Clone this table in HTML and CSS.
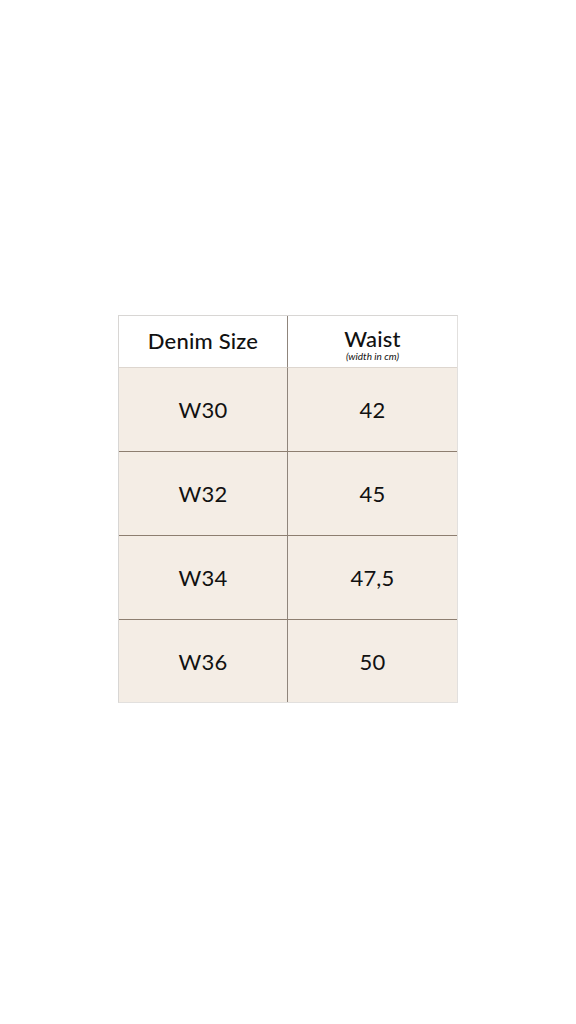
FILE: index.html
```html
<!DOCTYPE html>
<html lang="en">
<head>
<meta charset="utf-8">
<title>Denim Size Chart</title>
<link rel="stylesheet" href="styles.css">
</head>
<body>
<main class="page">
  <div class="chart">
    <div class="cell head left">Denim Size</div>
    <div class="cell head right">
      <span class="title">Waist</span>
      <span class="sub">(width in cm)</span>
    </div>
    <div class="cell body left">W30</div>
    <div class="cell body right">42</div>
    <div class="cell body left">W32</div>
    <div class="cell body right">45</div>
    <div class="cell body left">W34</div>
    <div class="cell body right">47,5</div>
    <div class="cell body left last">W36</div>
    <div class="cell body right last">50</div>
  </div>
</main>
</body>
</html>
```

FILE: styles.css
```css
html, body {
  margin: 0;
  padding: 0;
  background: #ffffff;
}

.page {
  width: 576px;
  height: 1024px;
  padding: 315px 0 0 118px;
  box-sizing: border-box;
  font-family: "Lato", "Noto Sans", sans-serif;
  color: #111111;
}

.chart {
  width: 340px;
  height: 388px;
  box-sizing: border-box;
  display: grid;
  grid-template-columns: 169px 169px;
  grid-template-rows: 52px 84px 84px 84px 82px;
  border: 1px solid #d8d6d4;
  border-right-color: #e2e0de;
  border-bottom-color: #e2e0de;
}

.cell {
  display: flex;
  align-items: center;
  justify-content: center;
  font-size: 22px;
  letter-spacing: 0.2px;
  box-sizing: border-box;
}

.head {
  background: #ffffff;
  border-bottom: 1px solid #ddd6cf;
}

.head.left {
  font-weight: 500;
  padding-bottom: 2px;
}

.left {
  border-right: 1px solid #8f857c;
}

.body {
  background: #f4ede5;
  border-bottom: 1px solid #8d7e70;
}

.body.last {
  border-bottom: none;
}

.head.right {
  flex-direction: column;
  padding-top: 6px;
}

.title {
  font-size: 22px;
  line-height: 24px;
  font-weight: 500;
}

.sub {
  font-size: 10px;
  font-style: italic;
  line-height: 11px;
  letter-spacing: 0;
}
```
